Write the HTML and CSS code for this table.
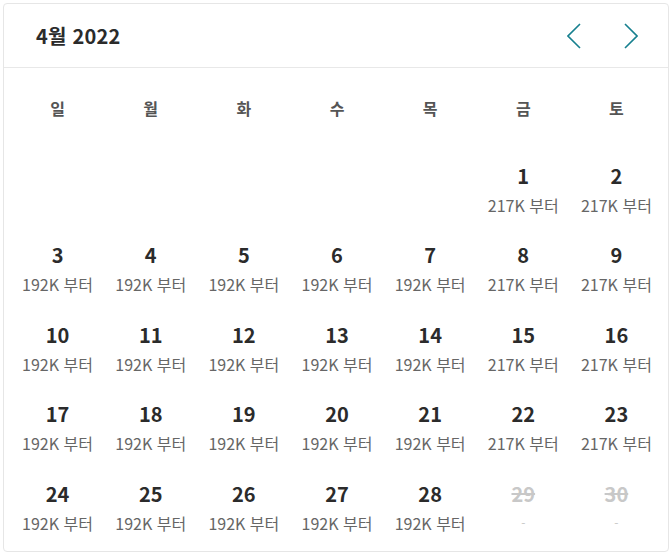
FILE: index.html
```html
<!DOCTYPE html>
<html lang="ko">
<head>
<meta charset="utf-8">
<link rel="stylesheet" href="styles.css">
</head>
<body>
<div class="card">
  <div class="header">
    <div class="title">4월 2022</div>
    <div class="nav">
      <button class="nav-btn" aria-label="이전 달">
        <svg width="14" height="26" viewBox="0 0 14 26"><path d="M13 1 L1 13 L13 25" fill="none" stroke="#17808f" stroke-width="1.6"/></svg>
      </button>
      <button class="nav-btn" aria-label="다음 달">
        <svg width="14" height="26" viewBox="0 0 14 26"><path d="M1 1 L13 13 L1 25" fill="none" stroke="#17808f" stroke-width="1.6"/></svg>
      </button>
    </div>
  </div>
  <div class="grid">
    <div class="wd">일</div><div class="wd">월</div><div class="wd">화</div><div class="wd">수</div><div class="wd">목</div><div class="wd">금</div><div class="wd">토</div>

    <div class="day empty"></div><div class="day empty"></div><div class="day empty"></div><div class="day empty"></div><div class="day empty"></div>
    <div class="day"><span class="num">1</span><span class="price">217K 부터</span></div>
    <div class="day"><span class="num">2</span><span class="price">217K 부터</span></div>

    <div class="day"><span class="num">3</span><span class="price">192K 부터</span></div>
    <div class="day"><span class="num">4</span><span class="price">192K 부터</span></div>
    <div class="day"><span class="num">5</span><span class="price">192K 부터</span></div>
    <div class="day"><span class="num">6</span><span class="price">192K 부터</span></div>
    <div class="day"><span class="num">7</span><span class="price">192K 부터</span></div>
    <div class="day"><span class="num">8</span><span class="price">217K 부터</span></div>
    <div class="day"><span class="num">9</span><span class="price">217K 부터</span></div>

    <div class="day"><span class="num">10</span><span class="price">192K 부터</span></div>
    <div class="day"><span class="num">11</span><span class="price">192K 부터</span></div>
    <div class="day"><span class="num">12</span><span class="price">192K 부터</span></div>
    <div class="day"><span class="num">13</span><span class="price">192K 부터</span></div>
    <div class="day"><span class="num">14</span><span class="price">192K 부터</span></div>
    <div class="day"><span class="num">15</span><span class="price">217K 부터</span></div>
    <div class="day"><span class="num">16</span><span class="price">217K 부터</span></div>

    <div class="day"><span class="num">17</span><span class="price">192K 부터</span></div>
    <div class="day"><span class="num">18</span><span class="price">192K 부터</span></div>
    <div class="day"><span class="num">19</span><span class="price">192K 부터</span></div>
    <div class="day"><span class="num">20</span><span class="price">192K 부터</span></div>
    <div class="day"><span class="num">21</span><span class="price">192K 부터</span></div>
    <div class="day"><span class="num">22</span><span class="price">217K 부터</span></div>
    <div class="day"><span class="num">23</span><span class="price">217K 부터</span></div>

    <div class="day"><span class="num">24</span><span class="price">192K 부터</span></div>
    <div class="day"><span class="num">25</span><span class="price">192K 부터</span></div>
    <div class="day"><span class="num">26</span><span class="price">192K 부터</span></div>
    <div class="day"><span class="num">27</span><span class="price">192K 부터</span></div>
    <div class="day"><span class="num">28</span><span class="price">192K 부터</span></div>
    <div class="day disabled"><span class="num">29</span><span class="price">-</span></div>
    <div class="day disabled"><span class="num">30</span><span class="price">-</span></div>
  </div>
</div>
</body>
</html>
```
FILE: styles.css
```css
* { box-sizing: border-box; }
html, body { margin: 0; padding: 0; background: #fff; }
body {
  padding: 3px;
  font-family: "Noto Sans CJK KR", "Noto Sans", sans-serif;
  color: #333;
}
.card {
  width: 666px;
  height: 549px;
  border: 1px solid #e6e6e6;
  border-radius: 4px;
  background: #fff;
}
.header {
  height: 64px;
  border-bottom: 1px solid #e8e8e8;
  display: flex;
  align-items: center;
  justify-content: space-between;
  padding: 0 30px 0 32px;
}
.title {
  font-size: 20px;
  font-weight: 700;
  color: #2b2b2b;
  line-height: 28px;
  letter-spacing: 0.2px;
}
.nav {
  display: flex;
  gap: 43px;
}
.nav-btn {
  border: 0;
  background: none;
  padding: 0;
  width: 14px;
  height: 26px;
  display: block;
  cursor: pointer;
}
.nav-btn svg { display: block; }
.grid {
  display: grid;
  grid-template-columns: repeat(7, 1fr);
  padding: 0 5px 0 7px;
  row-gap: 21.5px;
}
.wd {
  text-align: center;
  font-size: 16px;
  font-weight: 700;
  color: #555;
  line-height: 24px;
  padding-top: 28px;
  margin-bottom: 19px;
}
.day {
  display: flex;
  flex-direction: column;
  align-items: center;
  height: 58px;
}
.num {
  font-size: 20px;
  font-weight: 700;
  line-height: 30px;
  color: #2b2b2b;
}
.price {
  font-size: 16px;
  line-height: 28px;
  color: #666;
}
.disabled .num {
  color: #c8c8c8;
  text-decoration: line-through;
  text-decoration-thickness: 2px;
}
.disabled .price {
  color: #c8c8c8;
  font-size: 12px;
}
```
